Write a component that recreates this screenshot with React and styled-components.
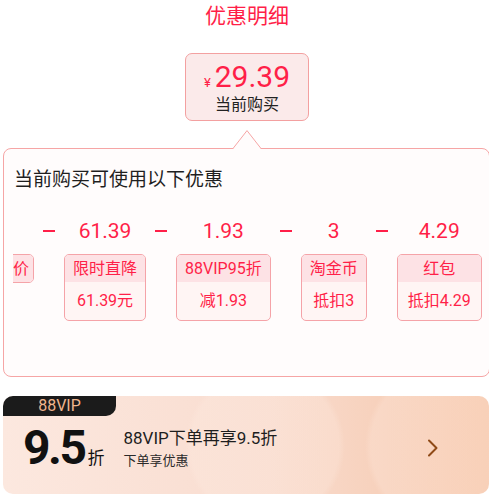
import React from 'react'
import styled, { createGlobalStyle } from 'styled-components'

const RED = '#ff1f48'

const GlobalStyle = createGlobalStyle`
  html, body {
    margin: 0;
    padding: 0;
    overflow: hidden;
    background: #fff;
  }
  body {
    font-family: Roboto, "Noto Sans CJK SC", sans-serif;
  }
`

const Page = styled.div`
  width: 489px;
`

const Top = styled.div`
  display: flex;
  flex-direction: column;
  align-items: center;
  padding: 2px 0 0 5px;
`

const Title = styled.div`
  font-size: 21px;
  line-height: 28px;
  color: ${RED};
`

const PriceBox = styled.div`
  margin-top: 23px;
  width: 124px;
  height: 68px;
  box-sizing: border-box;
  border: 1px solid #f3a0a0;
  border-radius: 7px;
  background: #fbeaea;
  display: flex;
  flex-direction: column;
  align-items: center;
  justify-content: center;
`

const PriceRow = styled.div`
  display: flex;
  align-items: baseline;
  color: ${RED};
`

const Yen = styled.span`
  font-size: 13px;
  margin-right: 4px;
`

const PriceNum = styled.span`
  font-size: 30px;
  line-height: 34px;
`

const PriceLabel = styled.div`
  font-size: 16px;
  line-height: 20px;
  color: #222;
  margin-top: 1px;
`

const Panel = styled.div`
  position: relative;
  margin: 27px 0 0 3px;
  width: 487px;
  height: 229px;
  box-sizing: border-box;
  border: 1px solid #f6a5a5;
  border-radius: 8px;
  background: #fffcfc;
  padding: 18px 0 0 9px;
`

const Notch = styled.svg`
  position: absolute;
  top: -19px;
  left: 50%;
  transform: translateX(-50%);
  display: block;
`

const PanelTitle = styled.div`
  font-size: 19px;
  line-height: 26px;
  color: #1f1f1f;
  padding-left: 1px;
`

const RowViewport = styled.div`
  overflow: hidden;
  margin-top: 24px;
`

const Row = styled.div`
  display: flex;
  align-items: flex-start;
  margin-left: -29px;
`

const Item = styled.div`
  display: flex;
  flex-direction: column;
  align-items: center;
  flex-shrink: 0;
`

const Amount = styled.div`
  height: 28px;
  font-size: 21px;
  line-height: 28px;
  color: ${RED};
  margin-bottom: 9px;
  white-space: nowrap;
`

const Op = styled.div`
  width: 30px;
  height: 28px;
  flex-shrink: 0;
  display: flex;
  align-items: center;
  justify-content: center;

  &::before {
    content: '';
    width: 12px;
    height: 1.5px;
    background: ${RED};
  }
`

const Coupon = styled.div`
  border: 1px solid #f5a3a8;
  border-radius: 5px;
  overflow: hidden;
  background: #fff5f4;
`

const CouponHead = styled.div`
  background: #fde2e5;
  padding: ${({ $lead }) => ($lead ? '0 4px 0 28px' : '0 8px')};
  height: 27px;
  line-height: 27px;
  font-size: 16px;
  color: ${RED};
  text-align: center;
  white-space: nowrap;
`

const CouponBody = styled.div`
  height: 38px;
  line-height: 38px;
  padding: 0 10px;
  font-size: 16px;
  color: ${RED};
  text-align: center;
  white-space: nowrap;
`

const VipCard = styled.div`
  margin: 19px 0 0 3px;
  width: 486px;
  height: 98px;
  border-radius: 10px;
  overflow: hidden;
  background:
    radial-gradient(circle at 262px 50px, rgba(255, 238, 228, 0.25) 0 74px, rgba(255, 238, 228, 0) 80px),
    radial-gradient(circle at 450px 50px, rgba(255, 232, 220, 0.3) 0 82px, rgba(255, 232, 220, 0) 88px),
    linear-gradient(90deg, #fce8df 0%, #f9dccf 55%, #f5c6a9 100%);
`

const VipTab = styled.div`
  width: 113px;
  height: 20px;
  background: #1b1b1b;
  border-radius: 0 0 10px 0;
  color: #f0b58e;
  font-size: 16px;
  line-height: 20px;
  text-align: center;
`

const VipContent = styled.div`
  display: flex;
  align-items: center;
  height: 64px;
  padding-left: 20px;
`

const Discount = styled.div`
  display: flex;
  align-items: baseline;
  color: #111;
`

const Big = styled.span`
  font-size: 48px;
  font-weight: 700;
  letter-spacing: -2.5px;
  line-height: 1;
`

const Zhe = styled.span`
  font-size: 17px;
  margin-left: 3px;
`

const VipText = styled.div`
  margin-left: 19px;
  display: flex;
  flex-direction: column;
`

const VipMain = styled.div`
  font-size: 17px;
  line-height: 22px;
  color: #1e1e1e;
`

const VipSub = styled.div`
  font-size: 13px;
  line-height: 18px;
  color: #2a2a2a;
  margin-top: 3px;
`

const Arrow = styled.svg`
  margin-left: auto;
  margin-right: 50px;
  display: block;
`

const coupons = [
  { amount: '', head: '价' },
  { amount: '61.39', head: '限时直降', body: '61.39元' },
  { amount: '1.93', head: '88VIP95折', body: '减1.93' },
  { amount: '3', head: '淘金币', body: '抵扣3' },
  { amount: '4.29', head: '红包', body: '抵扣4.29' }
]

export default function App() {
  return (
    <Page>
      <GlobalStyle />
      <Top>
        <Title>优惠明细</Title>
        <PriceBox>
          <PriceRow>
            <Yen>¥</Yen>
            <PriceNum>29.39</PriceNum>
          </PriceRow>
          <PriceLabel>当前购买</PriceLabel>
        </PriceBox>
      </Top>

      <Panel>
        <Notch width="28" height="19" viewBox="0 0 28 19">
          <polygon points="0,19 14,0.6 28,19" fill="#fffcfc" />
          <polyline points="0,18.5 14,0.6 28,18.5" fill="none" stroke="#f6a5a5" strokeWidth="1" />
        </Notch>
        <PanelTitle>当前购买可使用以下优惠</PanelTitle>
        <RowViewport>
          <Row>
            {coupons.map((c, i) => (
              <React.Fragment key={c.head}>
                {i > 0 && <Op />}
                <Item>
                  <Amount>{c.amount}</Amount>
                  <Coupon>
                    <CouponHead $lead={i === 0}>{c.head}</CouponHead>
                    {c.body && <CouponBody>{c.body}</CouponBody>}
                  </Coupon>
                </Item>
              </React.Fragment>
            ))}
          </Row>
        </RowViewport>
      </Panel>

      <VipCard>
        <VipTab>88VIP</VipTab>
        <VipContent>
          <Discount>
            <Big>9.5</Big>
            <Zhe>折</Zhe>
          </Discount>
          <VipText>
            <VipMain>88VIP下单再享9.5折</VipMain>
            <VipSub>下单享优惠</VipSub>
          </VipText>
          <Arrow width="12" height="18" viewBox="0 0 12 18">
            <polyline points="2,1.5 9.5,9 2,16.5" fill="none" stroke="#8f4a17" strokeWidth="2" strokeLinecap="round" strokeLinejoin="round" />
          </Arrow>
        </VipContent>
      </VipCard>
    </Page>
  )
}
